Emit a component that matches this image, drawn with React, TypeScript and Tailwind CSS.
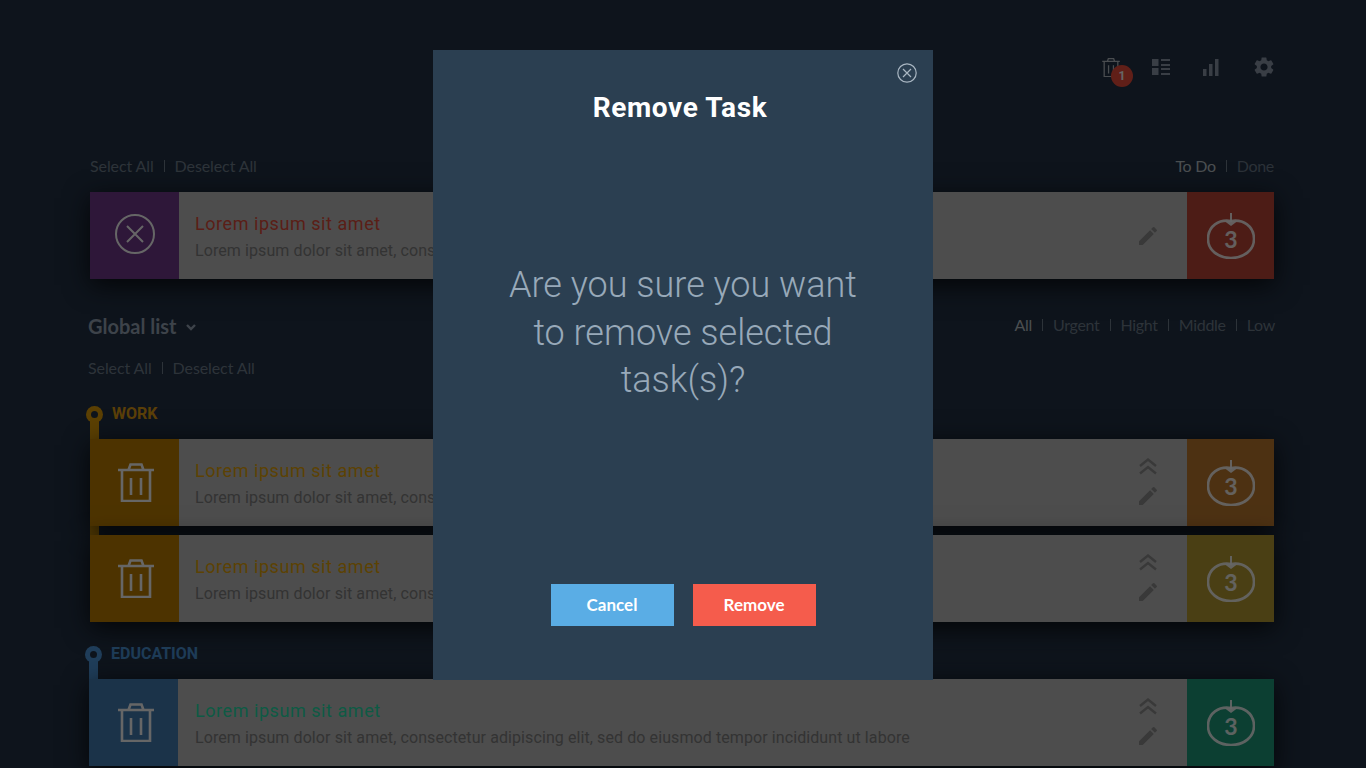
import { MdSettings } from "react-icons/md";

const pt = "font-['Lato',sans-serif]";
const desc = "Lorem ipsum dolor sit amet, consectetur adipiscing elit, sed do eiusmod tempor incididunt ut labore";

function Trash({ className }: { className: string }) {
  return (
    <svg viewBox="0 0 36 39" fill="none" stroke="currentColor" strokeWidth="2.600" className={className}>
      <path d="M0 7h36M4 7v31h28V7M10.500 7l2-5.500h11l2 5.500M13 15v17M23 15v17" />
    </svg>
  );
}

function Tomato() {
  return (
    <svg viewBox="0 0 48 46" className="h-[46px] w-[48px] text-white/90" fill="none" stroke="currentColor">
      <path strokeWidth="2.600" d="M24 8C36 6 47 13 47 26C47 37 37 45 24 45C11 45 1 37 1 26C1 13 12 6 24 8z" />
      <path strokeWidth="2" d="M24 0v9" />
      <path fill="currentColor" stroke="none" d="M18 8.500h12L24 13z" />
      <text x="24" y="35" textAnchor="middle" fill="currentColor" stroke="none" fontSize="23" fontWeight="700" fontFamily="Lato, sans-serif">3</text>
    </svg>
  );
}

function Pencil() {
  return (
    <svg viewBox="0 0 24 24" className="h-[24px] w-[24px] text-[#8f8f8f]" fill="currentColor">
      <path d="M3 17.250V21h3.750L17.810 9.940l-3.750-3.750L3 17.250zM20.710 7.040a1 1 0 0 0 0-1.410l-2.340-2.340a1 1 0 0 0-1.410 0l-1.830 1.830 3.750 3.750 1.830-1.830z" />
    </svg>
  );
}

function Chevrons() {
  return (
    <svg viewBox="0 0 18 17" className="h-[17px] w-[18px] text-[#8f8f8f]" fill="none" stroke="currentColor" strokeWidth="2.400">
      <path d="M1 8l8-6.500L17 8M1 15.500l8-6.500 8 6.500" />
    </svg>
  );
}

function Divider() {
  return <span className="h-[12px] w-px bg-[#71808f]" />;
}

function SelectLinks() {
  return (
    <div className={`flex h-[22px] items-center gap-[10px] pb-[2px] text-[16px] tracking-[-0.1px] text-[#71808f] ${pt}`}>
      <span>Select All</span>
      <Divider />
      <span>Deselect All</span>
    </div>
  );
}

interface RowProps {
  lead: React.ReactNode;
  leadColor: string;
  titleColor: string;
  tomatoColor: string;
  priority?: boolean;
  textInset?: string;
}

function TaskRow({ lead, leadColor, titleColor, tomatoColor, priority = false, textInset = "pl-[16px]" }: RowProps) {
  return (
    <div className="relative flex h-[87px] bg-[#c0c0c0] shadow-[0_6px_24px_rgba(0,0,0,0.75)]">
      <div className={`flex w-[89px] shrink-0 items-center justify-center ${leadColor}`}>{lead}</div>
      <div className={`min-w-0 flex-1 pt-[20px] ${textInset}`}>
        <p className={`text-[18px] leading-[24px] tracking-[0.55px] ${titleColor}`}>Lorem ipsum sit amet</p>
        <p className="mt-[3px] truncate text-[16px] leading-[24px] tracking-[0.09px] text-[#808080]">{desc}</p>
      </div>
      <div className="flex w-[78px] shrink-0 flex-col items-center justify-center pt-[1px]">
        {priority && (
          <div className="mb-[9px]">
            <Chevrons />
          </div>
        )}
        <Pencil />
      </div>
      <div className={`flex w-[87px] shrink-0 items-center justify-center ${tomatoColor}`}>
        <Tomato />
      </div>
    </div>
  );
}

function GroupLabel({ label, dot, text }: { label: string; dot: string; text: string }) {
  return (
    <div className="flex h-[20px] items-center">
      <span className={`relative -ml-[4px] flex h-[17px] w-[17px] items-center justify-center rounded-full ${dot}`}>
        <span className="h-[7px] w-[7px] rounded-full bg-[#233246]" />
      </span>
      <span className={`ml-[9px] text-[16px] font-bold ${text}`}>{label}</span>
    </div>
  );
}

export default function App() {
  return (
    <div className="relative h-[768px] w-[1366px] overflow-hidden bg-[#233246] font-['Roboto',sans-serif]">
      <main className="ml-[90px] w-[1184px]">
        <header className="flex h-[156px] items-start justify-end pt-[50px]">
          <div className="flex h-[34px] items-center text-[#8f9bad]">
            <div className="relative mr-[32px]">
              <Trash className="h-[19px] w-[18px] text-[#b9c1c8]" />
              <span className="absolute -right-[13px] top-[7px] flex h-[22px] w-[22px] items-center justify-center rounded-full bg-[#f04f3c] text-[12px] font-bold text-white">
                1
              </span>
            </div>
            <svg viewBox="0 0 18 16" className="h-[16px] w-[18px]" fill="currentColor">
              <path d="M0 0h6.500v7H0zM0 9h6.500v7H0zM9 0h9v2H9zM9 5h9v2H9zM9 9h9v2H9zM9 14h9v2H9z" />
            </svg>
            <svg viewBox="0 0 16 17" className="ml-[33px] h-[17px] w-[16px]" fill="currentColor">
              <path d="M0 10h3.500v7H0zM6 5h3.500v12H6zM12 0h3.500v17H12z" />
            </svg>
            <MdSettings className="-mr-[2px] ml-[33px] h-[24px] w-[24px]" />
          </div>
        </header>

        <div className="flex items-center justify-between">
          <SelectLinks />
          <div className={`flex h-[22px] items-center gap-[10px] pb-[2px] text-[16px] tracking-[-0.3px] ${pt}`}>
            <span className="text-[#bac3c9]">To Do</span>
            <Divider />
            <span className="text-[#6c7b8c]">Done</span>
          </div>
        </div>

        <div className="mt-[14px]">
          <TaskRow
            lead={
              <svg viewBox="0 0 40 40" className="mb-[3px] h-[40px] w-[40px] text-white" fill="none" stroke="currentColor" strokeWidth="2">
                <circle cx="20" cy="20" r="19" />
                <path d="M12 12l16 16M28 12L12 28" />
              </svg>
            }
            leadColor="bg-[#733a8f]"
            titleColor="text-[#e04d3a]"
            tomatoColor="bg-[#c04637]"
          />
        </div>

        <div className="-ml-[2px] mt-[33px] flex h-[28px] items-center justify-between">
          <div className={`flex items-center gap-[9px] text-[20px] font-bold text-[#9aa7b8] ${pt}`}>
            Global list
            <svg viewBox="0 0 10 7" className="mt-[2px] h-[7px] w-[10px]" fill="none" stroke="currentColor" strokeWidth="2.400">
              <path d="M1 1l4 4 4-4" />
            </svg>
          </div>
          <div className={`-mr-[1px] flex items-center gap-[10px] pb-[2px] text-[16px] tracking-[-0.3px] text-[#71808f] ${pt}`}>
            <span className="text-[#bac3c9]">All</span>
            <Divider />
            <span>Urgent</span>
            <Divider />
            <span>Hight</span>
            <Divider />
            <span>Middle</span>
            <Divider />
            <span>Low</span>
          </div>
        </div>

        <div className="-ml-[2px] mt-[18px]">
          <SelectLinks />
        </div>

        <section className="relative mt-[24px]">
          <span className="absolute left-0 top-[14px] h-[200px] w-[9px] bg-[#e4a008]" />
          <GroupLabel label="WORK" dot="bg-[#e4a008]" text="text-[#e19e14]" />
          <div className="mt-[15px] flex flex-col gap-[9px]">
            <TaskRow
              lead={<Trash className="ml-[3px] h-[39px] w-[36px] text-white" />}
              leadColor="bg-[#c08000]"
              titleColor="text-[#e6a508]"
              tomatoColor="bg-[#c07b2f]"
              priority
            />
            <TaskRow
              lead={<Trash className="ml-[3px] h-[39px] w-[36px] text-white" />}
              leadColor="bg-[#c08000]"
              titleColor="text-[#e6a508]"
              tomatoColor="bg-[#b99e32]"
              priority
            />
          </div>
        </section>

        <section className="relative -ml-px mt-[22px] w-[1185px]">
          <span className="absolute left-0 top-[14px] h-[30px] w-[9px] bg-[#4f9ae0]" />
          <GroupLabel label="EDUCATION" dot="bg-[#4f9ae0]" text="text-[#4b96da]" />
          <div className="mt-[15px]">
            <TaskRow
              lead={<Trash className="ml-[5px] h-[39px] w-[36px] text-white" />}
              leadColor="bg-[#4480b7]"
              titleColor="text-[#25e0ab]"
              tomatoColor="bg-[#1e9e7d]"
              priority
              textInset="pl-[17px]"
            />
          </div>
        </section>
      </main>

      <div className="absolute inset-0 bg-black/60" />

      <div className="absolute left-[433px] top-[50px] flex h-[630px] w-[500px] flex-col items-center bg-[#2b3f51]">
        <button className="absolute right-[16px] top-[13px] text-[#a9b6c2]">
          <svg viewBox="0 0 20 20" className="h-[20px] w-[20px]" fill="none" stroke="currentColor" strokeWidth="1.200">
            <circle cx="10" cy="10" r="9.200" />
            <path d="M6 6l8 8M14 6l-8 8" />
          </svg>
        </button>
        <h2 className="-ml-[6px] mt-[40px] text-[28px] font-bold leading-[36px] tracking-[0.6px] text-white">Remove Task</h2>
        <p className="mt-[136px] w-[360px] text-center text-[36px] font-light leading-[47.500px] text-[#98a9b9]">
          Are you sure you want to remove selected task(s)?
        </p>
        <div className="mt-[179px] flex gap-[19px]">
          <button className={`h-[42px] w-[123px] bg-[#5aade5] text-[17px] font-bold text-white ${pt}`}>Cancel</button>
          <button className={`h-[42px] w-[123px] bg-[#f55c4c] text-[17px] font-bold text-white ${pt}`}>Remove</button>
        </div>
      </div>
    </div>
  );
}
